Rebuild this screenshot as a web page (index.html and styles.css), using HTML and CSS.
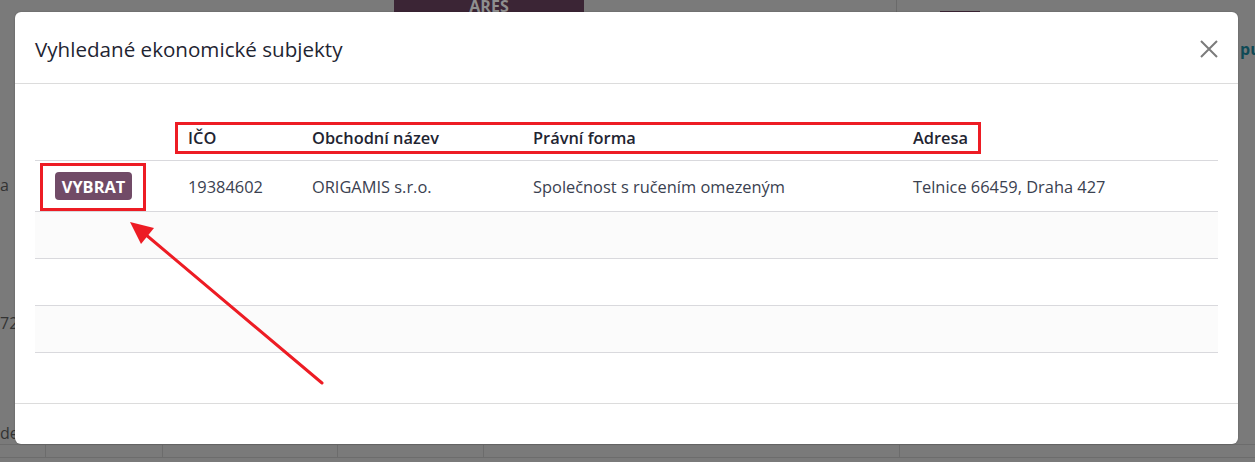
FILE: index.html
```html
<!DOCTYPE html>
<html lang="cs">
<head>
<meta charset="utf-8">
<title>Vyhledané ekonomické subjekty</title>
<link rel="stylesheet" href="styles.css">
</head>
<body>
<div class="page">
  <div class="page-top">
    <div class="page-ares">ARES</div>
    <div class="page-divider"></div>
    <div class="page-chip"></div>
  </div>
  <div class="page-main">
    <div class="page-left">
      <span class="pl-a">a</span>
      <span class="pl-72">72</span>
      <span class="pl-de">de</span>
    </div>
    <div class="page-right"><span class="pr-pu">pu</span></div>
  </div>
  <div class="page-grid">
    <div class="pg-cell c1"></div><div class="pg-cell c2"></div><div class="pg-cell c3"></div><div class="pg-cell c4"></div><div class="pg-cell c5"></div><div class="pg-cell c6"></div>
  </div>
</div>

<div class="modal">
  <header class="modal-header">
    <h4 class="modal-title">Vyhledané ekonomické subjekty</h4>
    <button class="btn-close" aria-label="Zavřít">
      <svg width="20" height="20" viewBox="0 0 20 20"><path d="M2 2 L18 18 M18 2 L2 18" stroke="#7b7b7b" stroke-width="2" fill="none"/></svg>
    </button>
  </header>
  <div class="modal-body">
    <table class="list">
      <colgroup>
        <col class="w1"><col class="w2"><col class="w3"><col class="w4"><col>
      </colgroup>
      <thead>
        <tr><th></th><th>IČO</th><th>Obchodní název</th><th>Právní forma</th><th>Adresa</th></tr>
      </thead>
      <tbody>
        <tr class="data">
          <td class="btn-cell"><button class="btn-primary">VYBRAT</button></td>
          <td>19384602</td>
          <td>ORIGAMIS s.r.o.</td>
          <td>Společnost s ručením omezeným</td>
          <td>Telnice 66459, Draha 427</td>
        </tr>
        <tr class="empty odd"><td></td><td></td><td></td><td></td><td></td></tr>
        <tr class="empty"><td></td><td></td><td></td><td></td><td></td></tr>
        <tr class="empty odd"><td></td><td></td><td></td><td></td><td></td></tr>
      </tbody>
    </table>
  </div>
  <footer class="modal-footer"></footer>
</div>

<div class="mark mark-head"></div>
<div class="mark mark-btn"></div>
<svg class="arrow" width="1255" height="462" viewBox="0 0 1255 462">
  <line x1="322" y1="383" x2="145" y2="234" stroke="#ed1c24" stroke-width="3" stroke-linecap="round"/>
  <polygon points="130,222 154,228 141,244" fill="#ed1c24"/>
</svg>
</body>
</html>
```
FILE: styles.css
```css
html, body {
  margin: 0;
  padding: 0;
}
body {
  width: 1255px;
  height: 462px;
  overflow: hidden;
  background: #7a7a7a;
  font-family: "Open Sans", "Noto Sans", sans-serif;
  position: relative;
}

/* dimmed page behind */
.page {
  width: 1255px;
  height: 462px;
  display: flex;
  flex-direction: column;
  color: #2a2a2a;
}
.page-top {
  height: 12px;
  display: flex;
  flex-shrink: 0;
}
.page-ares {
  margin-left: 394px;
  width: 190px;
  background: #3b2535;
  color: #8f8f8f;
  font-weight: 700;
  font-size: 16px;
  line-height: 12px;
  overflow: hidden;
  height: 12px;
  display: flex;
  align-items: flex-end;
  justify-content: center;
}
.page-divider {
  margin-left: 312px;
  width: 1px;
  background: #6a6a6a;
}
.page-chip {
  margin-left: 43px;
  width: 40px;
  height: 1px;
  align-self: flex-end;
  background: #3b2535;
}
.page-main {
  flex: 1;
  display: flex;
  justify-content: space-between;
}
.page-left {
  width: 15px;
  display: flex;
  flex-direction: column;
  font-size: 16px;
  color: #333;
  overflow: hidden;
}
.pl-a { margin-top: 162px; }
.pl-72 { margin-top: 116px; }
.pl-de { margin-top: 88px; }
.page-right {
  width: 17px;
  overflow: hidden;
}
.pr-pu {
  display: block;
  margin-top: 26px;
  margin-left: 2px;
  color: #0f4a56;
  font-weight: 700;
  font-size: 16px;
}
.page-grid {
  height: 48px;
  display: flex;
  border-top: 1px solid #6c6c6c;
  border-bottom: 1px solid #6c6c6c;
  margin-bottom: 4px;
  box-sizing: border-box;
}
.pg-cell {
  border-right: 1px solid #6c6c6c;
}
.pg-cell.c1 { width: 45px; }
.pg-cell.c2 { width: 116px; }
.pg-cell.c3 { width: 174px; }
.pg-cell.c4 { width: 145px; }
.pg-cell.c5 { width: 415px; }
.pg-cell.c6 { flex: 1; border-right: 0; }

/* modal */
.modal {
  position: absolute;
  left: 15px;
  top: 12px;
  width: 1223px;
  height: 432px;
  background: #fff;
  border-radius: 6px;
  display: flex;
  flex-direction: column;
  box-shadow: 0 0 2px rgba(0,0,0,0.25);
}
.modal-header {
  height: 72px;
  box-sizing: border-box;
  border-bottom: 1px solid #dcdcdc;
  display: flex;
  align-items: center;
  justify-content: space-between;
  padding: 2px 19px 0 20px;
  flex-shrink: 0;
}
.modal-title {
  margin: 0;
  font-size: 20.6px;
  font-weight: 400;
  color: #1f2532;
}
.btn-close {
  border: 0;
  background: transparent;
  padding: 0;
  width: 20px;
  height: 20px;
  display: flex;
  cursor: pointer;
}
.modal-body {
  flex: 1;
  padding: 31px 20px 0 20px;
  box-sizing: border-box;
}
.modal-footer {
  height: 41px;
  border-top: 1px solid #dcdcdc;
  box-sizing: border-box;
  flex-shrink: 0;
}

.list {
  width: 1183px;
  border-collapse: collapse;
  table-layout: fixed;
  font-size: 16.4px;
}
.list col.w1 { width: 145px; }
.list col.w2 { width: 124px; }
.list col.w3 { width: 221px; }
.list col.w4 { width: 380px; }
.list th {
  height: 45px;
  text-align: left;
  font-weight: 600;
  color: #1f2532;
  padding: 0 8px;
  border-bottom: 1px solid #d9d9dd;
  vertical-align: middle;
  white-space: nowrap;
}
.list td {
  padding: 0 8px;
  color: #3a4150;
  border-bottom: 1px solid #d9d9dd;
  vertical-align: middle;
  white-space: nowrap;
}
.list tr.data td { height: 50px; }
.list tr.empty td { height: 46px; }
.list tr.odd td { background: #fbfbfb; }
.list td.btn-cell { padding-left: 20px; }
.btn-primary {
  background: #714b67;
  color: #fff;
  border: 0;
  border-radius: 4px;
  font-family: "Open Sans", "Noto Sans", sans-serif;
  font-weight: 700;
  font-size: 16.4px;
  height: 28px;
  width: 77px;
  padding: 0;
  cursor: pointer;
}

/* annotations */
.mark {
  position: absolute;
  border: 3px solid #ed1c24;
  box-sizing: border-box;
}
.mark-head {
  left: 175px;
  top: 122px;
  width: 806px;
  height: 32px;
}
.mark-btn {
  left: 40px;
  top: 163px;
  width: 106px;
  height: 48px;
}
.arrow {
  position: absolute;
  left: 0;
  top: 0;
  pointer-events: none;
}
```
